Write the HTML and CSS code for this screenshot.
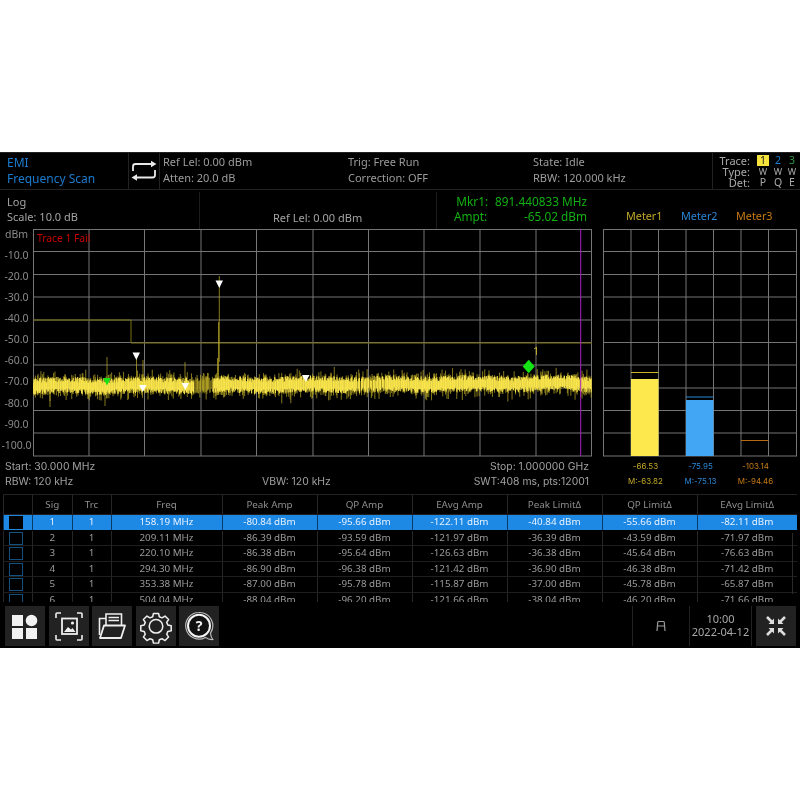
FILE: index.html
```html
<!DOCTYPE html>
<html lang="en">
<head>
<meta charset="utf-8">
<title>EMI Frequency Scan</title>
<link rel="stylesheet" href="styles.css">
</head>
<body>
<main class="panel">
  <header class="status">
    <div class="mode"><div>EMI</div><div>Frequency Scan</div></div>
    <div class="swap">
      <svg width="26" height="22" viewBox="0 0 26 22" fill="none" stroke="#e8e8e8" stroke-width="1.800"><path d="M2 11V6.500q0-2.500 2.500-2.500H21M24 10v5q0 2.500-2.500 2.500H5"/><path d="M20 .8 25.500 4 20 7.200zM6 14.300.5 17.500 6 20.700z" fill="#e8e8e8" stroke="none"/></svg>
    </div>
    <div class="info info-a"><div>Ref Lel: 0.00 dBm</div><div>Atten: 20.0 dB</div></div>
    <div class="info info-b"><div>Trig: Free Run</div><div>Correction: OFF</div></div>
    <div class="info info-c"><div>State: Idle</div><div>RBW: 120.000 kHz</div></div>
    <div class="legend">
      <span class="lab">Trace:</span><span class="t1">1</span><span class="t2">2</span><span class="t3">3</span>
      <span class="lab">Type:</span><span class="w">W</span><span class="w">W</span><span class="w">W</span>
      <span class="lab">Det:</span><span>P</span><span>Q</span><span>E</span>
    </div>
  </header>

  <section class="readout">
    <div class="scale"><div>Log</div><div>Scale: 10.0 dB</div></div>
    <div class="ref">Ref Lel: 0.00 dBm</div>
    <div class="marker">
      <div class="marker-row marker-top"><span>Mkr1:</span><span>891.440833 MHz</span></div>
      <div class="marker-row"><span>Ampt:</span><span>-65.02 dBm</span></div>
    </div>
    <div class="meters"><span class="m1">Meter1</span><span class="m2">Meter2</span><span class="m3">Meter3</span></div>
  </section>

  <section class="scope">
    <div class="axis">
      <span>dBm</span><span>-10.0</span><span>-20.0</span><span>-30.0</span><span>-40.0</span><span>-50.0</span><span>-60.0</span><span>-70.0</span><span>-80.0</span><span>-90.0</span><span>-100.0</span>
    </div>
    <div class="plot">
      <svg id="spectrum" class="plot-svg" width="559" height="228" viewBox="33 229 559 228">
        <path class="grid" d="M33.500 229V456M89 229V456M144.500 229V456M201 229V456M256.500 229V456M313 229V456M368.500 229V456M424 229V456M480 229V456M536 229V456M591.500 229V456M33 229.500H592M33 251.500H592M33 274.500H592M33 297H592M33 320H592M33 342.500H592M33 365H592M33 388H592M33 410.500H592M33 433H592M33 456H592"/>
        <path class="limit" d="M33 320H131V343H592"/>
        <g id="trace"></g>
        <path class="cursor" d="M580.700 229V456"/>
        <g class="pins">
          <path d="M215.500 280.500h7.500l-3.700 7.500z"/>
          <path d="M132.500 352.500h7.500l-3.700 7.500z"/>
          <path d="M139 385h7.500l-3.700 7z"/>
          <path d="M181.500 383h7.500l-3.700 7z"/>
          <path d="M302 375h7.500l-3.700 7z"/>
        </g>
        <path class="pin-green" d="M103.200 378h7.500l-3.700 7.500z"/>
        <path class="pin-green" d="M528.700 359.800l6 6.700-6 6.700-6-6.700z"/>
      </svg>
      <span class="trace-fail">Trace 1 Fail</span>
      <span class="mark-one">1</span>
    </div>
    <div class="meter-plot">
      <svg class="plot-svg" width="195" height="228" viewBox="603 229 195 228">
        <path class="grid" d="M603.500 229V456M631 229V456M658.500 229V456M686 229V456M713.500 229V456M741 229V456M768.500 229V456M796.500 229V456M603 229.500H797M603 251.500H797M603 274.500H797M603 297H797M603 320H797M603 342.500H797M603 365H797M603 388H797M603 410.500H797M603 433H797M603 456H797"/>
        <rect class="bar-y" x="631" y="379" width="27.500" height="77"/>
        <rect class="bar-b" x="686" y="400" width="27.500" height="56"/>
        <path class="peak-y" d="M631 372.500H658.500"/>
        <path class="peak-b" d="M686 397H713.500"/>
        <path class="peak-o" d="M741 440.500H768.500"/>
      </svg>
    </div>
  </section>

  <section class="foot">
    <div class="foot-info">
      <div class="foot-row"><span>Start: 30.000 MHz</span><span>Stop: 1.000000 GHz</span></div>
      <div class="foot-row"><span class="foot-rbw">RBW: 120 kHz</span><span class="foot-vbw">VBW: 120 kHz</span><span>SWT:408 ms, pts:12001</span></div>
    </div>
    <div class="foot-meters">
      <div class="m1"><div>-66.53</div><div>M:-63.82</div></div>
      <div class="m2"><div>-75.95</div><div>M:-75.13</div></div>
      <div class="m3"><div>-103.14</div><div>M:-94.46</div></div>
    </div>
  </section>

  <section class="table">
    <div class="tr th"><span></span><span>Sig</span><span>Trc</span><span>Freq</span><span>Peak Amp</span><span>QP Amp</span><span>EAvg Amp</span><span>Peak Limit∆</span><span>QP Limit∆</span><span>EAvg Limit∆</span></div>
    <div class="tr sel"><span><i class="box"></i></span><span>1</span><span>1</span><span>158.19 MHz</span><span>-80.84 dBm</span><span>-95.66 dBm</span><span>-122.11 dBm</span><span>-40.84 dBm</span><span>-55.66 dBm</span><span>-82.11 dBm</span></div>
    <div class="tr"><span><i class="box"></i></span><span>2</span><span>1</span><span>209.11 MHz</span><span>-86.39 dBm</span><span>-93.59 dBm</span><span>-121.97 dBm</span><span>-36.39 dBm</span><span>-43.59 dBm</span><span>-71.97 dBm</span></div>
    <div class="tr"><span><i class="box"></i></span><span>3</span><span>1</span><span>220.10 MHz</span><span>-86.38 dBm</span><span>-95.64 dBm</span><span>-126.63 dBm</span><span>-36.38 dBm</span><span>-45.64 dBm</span><span>-76.63 dBm</span></div>
    <div class="tr"><span><i class="box"></i></span><span>4</span><span>1</span><span>294.30 MHz</span><span>-86.90 dBm</span><span>-96.38 dBm</span><span>-121.42 dBm</span><span>-36.90 dBm</span><span>-46.38 dBm</span><span>-71.42 dBm</span></div>
    <div class="tr"><span><i class="box"></i></span><span>5</span><span>1</span><span>353.38 MHz</span><span>-87.00 dBm</span><span>-95.78 dBm</span><span>-115.87 dBm</span><span>-37.00 dBm</span><span>-45.78 dBm</span><span>-65.87 dBm</span></div>
    <div class="tr"><span><i class="box"></i></span><span>6</span><span>1</span><span>504.04 MHz</span><span>-88.04 dBm</span><span>-96.20 dBm</span><span>-121.66 dBm</span><span>-38.04 dBm</span><span>-46.20 dBm</span><span>-71.66 dBm</span></div>
    <i class="scrollbar"></i>
  </section>

  <footer class="toolbar">
    <button class="tool" aria-label="Home">
      <svg width="40" height="40" viewBox="0 0 40 40" fill="#f2f2f2"><rect x="7" y="9" width="11" height="11"/><circle cx="26.500" cy="14.500" r="5.800"/><rect x="7" y="22" width="11" height="11"/><rect x="21" y="22" width="11" height="11"/></svg>
    </button>
    <button class="tool" aria-label="Screenshot">
      <svg width="40" height="40" viewBox="0 0 40 40" fill="none" stroke="#eee" stroke-width="1.600"><path d="M7 12V8q0-1 1-1h4M28 7h4q1 0 1 1v4M33 29v4q0 1-1 1h-4M12 34H8q-1 0-1-1v-4"/><rect x="13" y="12.500" width="15" height="15.500" stroke-width="1.800"/><path d="M15 26l4-5 3 2.500 1.500-1.500 3 4z" fill="#eee" stroke="none"/><circle cx="23.500" cy="17" r="1.600" fill="#eee" stroke="none"/></svg>
    </button>
    <button class="tool" aria-label="Files">
      <svg width="40" height="40" viewBox="0 0 40 40" fill="none" stroke="#eee" stroke-width="1.600"><path d="M7.500 29V12.500H14"/><path d="M14 19V8h15.500v11"/><path d="M16.500 11.500h10.500M16.500 14.500h10.500" stroke-width="1.500"/><path d="M8 32 12 19.500h21L29 32z" fill="#222" stroke-width="1.800" stroke-linejoin="round"/></svg>
    </button>
    <button class="tool" aria-label="Settings">
      <svg width="40" height="40" viewBox="0 0 40 40" fill="none" stroke="#eee" stroke-width="1.800"><g transform="translate(20 20.300) scale(.85) translate(-20 -20)"><path stroke-linejoin="round" d="M17 4.500h6l.9 4 3.200 1.300 3.500-2.200 4.200 4.200-2.200 3.500 1.300 3.200 4 .9v6l-4 .9-1.300 3.200 2.200 3.500-4.200 4.200-3.500-2.200-3.200 1.300-.9 4h-6l-.9-4-3.200-1.300-3.500 2.200-4.200-4.200 2.200-3.500-1.300-3.200-4-.9v-6l4-.9 1.300-3.200-2.200-3.500 4.200-4.200 3.500 2.200 3.200-1.300z" transform="translate(0 .500) scale(1 .975)"/><circle cx="20" cy="20" r="8"/></g></svg>
    </button>
    <button class="tool" aria-label="Help">
      <svg width="40" height="40" viewBox="0 0 40 40" fill="none"><path d="M20 6.500a13.300 13.300 0 1 0 6.500 24.900c2 1.600 4.500 2.300 7.300 2.100-1.200-1.600-2-3.400-2.300-6.300A13.300 13.300 0 0 0 20 6.500z" stroke="#bbb" stroke-width="1.200"/><circle cx="20" cy="19.800" r="11" fill="#111" stroke="#f4f4f4" stroke-width="2"/></svg>
      <span class="help-q">?</span>
    </button>
    <div class="tool-right">
      <div class="usb">
        <svg width="12" height="12" viewBox="0 0 12 12" fill="none" stroke="#999" stroke-width="1.200"><path d="M3 1.500h6M2.800 1.500 2 11M9.200 1.500 10 11M2.500 6h7"/></svg>
      </div>
      <div class="clock"><div>10:00</div><div>2022-04-12</div></div>
      <button class="tool" aria-label="Exit full screen">
        <svg width="40" height="40" viewBox="0 0 40 40" fill="none" stroke="#ddd" stroke-width="2.600"><path d="M11 11l6 6M29 11l-6 6M11 29l6-6M29 29l-6-6"/><path d="M18 12.500V18h-5.500zM22 12.500V18h5.500zM18 27.500V22h-5.500zM22 27.500V22h5.500z" fill="#ddd" stroke="none"/></svg>
      </button>
    </div>
  </footer>
</main>
<script src="script.js"></script>
</body>
</html>
```

FILE: styles.css
```css
* { box-sizing: border-box; }
html, body { margin: 0; padding: 0; background: #fff; }
body { height: 800px; padding-top: 152px; overflow: hidden; }

.panel {
  width: 800px;
  height: 496px;
  background: #000;
  color: #9c9c9c;
  font-family: "Noto Sans", "Open Sans", sans-serif;
  font-size: 11px;
  line-height: 15px;
  overflow: hidden;
  filter: blur(0.35px);
}

/* status bar */
.status {
  height: 38px;
  display: flex;
  border-top: 1px solid #222;
  border-bottom: 1px solid #222;
}
.mode { width: 129px; padding: 2px 0 0 7px; color: #1a7cd0; font-size: 12px; line-height: 16px; border-right: 1px solid #222; }
.swap { width: 31px; display: flex; align-items: center; justify-content: center; border-right: 1px solid #222; }
.info { padding: 1px 0 0 3px; line-height: 16px; }
.info-a { width: 185px; }
.info-b { width: 185px; }
.info-c { width: 182px; }
.legend {
  width: 88px;
  padding-top: 2px;
  border-left: 1px solid #222;
  display: grid;
  grid-template-columns: 42px 16px 14px 14px;
  grid-auto-rows: 11px;
  justify-items: center;
  line-height: 11px;
  font-size: 10.500px;
  color: #aaa;
}
.legend .lab { justify-self: end; padding-right: 5px; font-size: 11px; }
.legend .w { font-size: 9px; }
.legend .t1 { background: #f5e23c; color: #222; width: 12px; height: 11px; text-align: center; }
.legend .t2 { color: #1a7cd0; }
.legend .t3 { color: #2e9a3c; }

/* readout */
.readout { height: 39px; display: flex; color: #a4a4a4; }
.scale { width: 200px; padding: 1.500px 0 0 7px; border-right: 1px solid #1c1c1c; margin-top: 2px; }
.ref { width: 237px; padding: 17.500px 0 0 73px; border-right: 1px solid #1c1c1c; margin-top: 2px; white-space: nowrap; }
.marker { width: 151px; color: #12b012; font-size: 11.800px; line-height: 15px; padding: 4px 1px 0 17px; white-space: nowrap; }
.marker-row { display: flex; justify-content: space-between; }
.marker-top { justify-content: flex-end; gap: 7px; }
.meters { flex: 1; display: flex; padding: 18px 0 0 38px; gap: 18.500px; font-size: 10.800px; }
.m1 { color: #c2a828; }
.m2 { color: #2a86d6; }
.m3 { color: #c67a14; }

/* plots */
.scope { height: 228px; display: grid; grid-template-columns: 33px 559px 11px 195px; }
.axis {
  grid-column: 1;
  display: flex;
  flex-direction: column;
  align-items: center;
  font-size: 10.500px;
  line-height: 21.130px;
  color: #8a8a8a;
  margin-top: -5.500px;
  white-space: nowrap;
}
.plot { grid-column: 2; position: relative; }
.meter-plot { grid-column: 4; }
.plot-svg { display: block; }
.grid { stroke: #757575; stroke-width: 1; fill: none; }
.limit { stroke: #7a7012; stroke-width: 1; fill: none; }
.cursor { stroke: #a820c0; stroke-width: 1; fill: none; }
.pins { fill: #fff; }
.pin-green { fill: #14e414; }
.trace-fail { position: absolute; left: 4px; top: 2px; color: #c80000; font-size: 10.300px; line-height: 15px; }
.mark-one { position: absolute; left: 500px; top: 115px; color: #c4ae2a; font-size: 11px; line-height: 14px; }
.bar-y { fill: #fde84e; }
.bar-b { fill: #42a6f5; }
.peak-y { stroke: #c8b428; stroke-width: 1; }
.peak-b { stroke: #2d86d0; stroke-width: 1; }
.peak-o { stroke: #b86a10; stroke-width: 1; }

/* foot text */
.foot { height: 36px; display: grid; grid-template-columns: 603px 197px; padding-top: 2px; }
.foot-info { font-family: Inter, "Open Sans", sans-serif; font-size: 10.400px; line-height: 15px; padding: 0 14px 0 5px; color: #a0a0a0; }
.foot-row { display: flex; justify-content: space-between; }
.foot-rbw { width: 257px; }
.foot-vbw { flex: 1; }
.foot-meters { display: flex; padding-left: 15px; font-family: Inter, "Open Sans", sans-serif; font-size: 8px; line-height: 14.500px; text-align: center; }
.foot-meters > div { width: 55px; }

/* table */
.table { position: relative; height: 108px; margin: 1px 3px 0; border-top: 1px solid #222; overflow: hidden; font-size: 9.800px; }
.tr {
  display: grid;
  grid-template-columns: 29px 39.500px 39px 111px 95px 95px 95px 95px 95px 100.500px;
  height: 15.500px;
  line-height: 14.500px;
  text-align: center;
  border-bottom: 1px solid #1f1f1f;
  color: #9a9a9a;
}
.tr > span { position: relative; display: block; border-left: 1px solid #262626; white-space: nowrap; }
.th { height: 20px; line-height: 19px; color: #8e8e8e; }
.sel { background: #1e88e5; color: #e6f2ff; border-bottom-color: #000; }
.sel > span { border-left-color: #0a3a66; }
.box { display: block; width: 14px; height: 13px; margin: 1px 0 0 5px; border: 1px solid #14507e; }
.sel .box { background: #000; border-color: #000; }
.scrollbar { position: absolute; right: 4px; top: 38px; bottom: 8px; width: 1px; background: #2a2a2a; }

/* toolbar */
.toolbar { height: 44px; display: flex; gap: 3.500px; padding: 4px 4px 0 5px; }
.tool { position: relative; width: 40px; height: 40px; padding: 0; border: 0; background: #222; }
.tool svg { display: block; }
.help-q { position: absolute; left: 0; right: 0; top: 9.500px; color: #f4f4f4; font: 700 14px/20px "Noto Sans", sans-serif; text-align: center; }
.tool-right { margin-left: auto; display: flex; height: 40px; }
.usb { width: 57px; border-left: 1px solid #222; display: flex; align-items: center; justify-content: center; }
.clock { width: 63px; border-left: 1px solid #222; border-right: 1px solid #222; margin-right: 4px; text-align: center; color: #a8a8a8; font-size: 11px; line-height: 13px; padding-top: 6px; white-space: nowrap; }
```

FILE: script.js
```js
(function () {
  var seed = 4711;
  function rnd() { seed = (seed * 16807) % 2147483647; return seed / 2147483647; }
  var NS = "http://www.w3.org/2000/svg";
  var host = document.getElementById("trace");
  var core = "", fringe = "", dim = "";
  function centre(x) { return 386 - (x - 33) / 558 * 2.600 + 0.7 * Math.sin(x / 13); }
  for (var x = 33.25; x < 591.5; x += 0.7) {
    var c = centre(x);
    var up = 3 + rnd() * 5.500, dn = 3 + rnd() * 5.500;
    var hollow = (x > 194 && x < 213) || (x > 356 && x < 387 && Math.floor(x) % 3 === 0);
    if (!hollow) core += "M" + x + " " + (c - up) + "V" + (c + dn);
    else dim += "M" + x + " " + (c - up) + "V" + (c + dn);
    if (rnd() < 0.6) {
      var a = c - up - 1 - rnd() * rnd() * 9, b = c + dn + 1 + rnd() * rnd() * 11;
      fringe += "M" + x + " " + a + "V" + b;
    }
  }
  [[107, 357, 398], [136.500, 355, 378], [143, 360, 380], [185, 362, 385], [50, 378, 407], [105, 380, 406]].forEach(function (s) {
    fringe += "M" + s[0] + " " + s[1] + "V" + s[2];
  });
  fringe += "M219.300 276V362M218.500 322V395M217.500 358V395";
  function add(d, w, col) {
    var p = document.createElementNS(NS, "path");
    p.setAttribute("d", d);
    p.setAttribute("stroke", col);
    p.setAttribute("stroke-width", w);
    p.setAttribute("fill", "none");
    host.appendChild(p);
  }
  add(dim, 1, "#7a6f1a");
  add(fringe, 0.7, "#bfae28");
  add(core, 1, "#fde84e");
})();
```
